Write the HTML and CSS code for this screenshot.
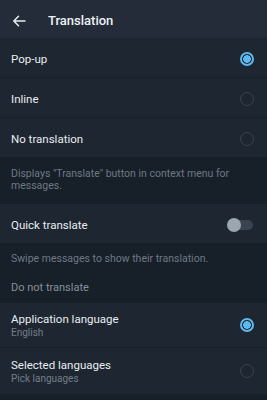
FILE: index.html
```html
<!DOCTYPE html>
<html>
<head>
<meta charset="utf-8">
<link rel="stylesheet" href="styles.css">
</head>
<body>
<div class="app">
  <header class="topbar">
    <svg class="back" width="14" height="12" viewBox="0 0 14 12"><path d="M13 6H2M6.5 1.3L1.8 6l4.7 4.7" fill="none" stroke="#e6ebef" stroke-width="1.5" stroke-linecap="round" stroke-linejoin="round"/></svg>
    <h1 class="title">Translation</h1>
  </header>

  <section class="group">
    <div class="row"><span class="label">Pop-up</span><span class="radio on"></span></div>
    <div class="row"><span class="label">Inline</span><span class="radio"></span></div>
    <div class="row"><span class="label">No translation</span><span class="radio"></span></div>
  </section>
  <p class="info first">Displays "Translate" button in context menu for messages.</p>

  <section class="group">
    <div class="row"><span class="label">Quick translate</span><span class="toggle"><span class="knob"></span></span></div>
  </section>
  <p class="info second">Swipe messages to show their translation.</p>
  <p class="caption">Do not translate</p>

  <section class="group">
    <div class="row tall">
      <div class="texts"><span class="label">Application language</span><span class="sub">English</span></div>
      <span class="radio on"></span>
    </div>
    <div class="row tall">
      <div class="texts"><span class="label">Selected languages</span><span class="sub">Pick languages</span></div>
      <span class="radio"></span>
    </div>
  </section>
</div>
</body>
</html>
```

FILE: styles.css
```css
html, body {
  margin: 0;
  padding: 0;
  background: #171f28;
  font-family: Roboto, "Liberation Sans", sans-serif;
}
.app {
  width: 267px;
  min-height: 400px;
  background: #171f28;
}
.topbar {
  height: 38px;
  background: #232c38;
  display: flex;
  align-items: center;
  padding: 3px 0 0 12px;
  box-sizing: border-box;
}
.back { display: block; margin-right: 22px; }
.title {
  margin: 0;
  font-size: 13px;
  font-weight: 500;
  color: #eef1f4;
}
.group { background: #1d2631; }
.row {
  height: 39px;
  display: flex;
  align-items: center;
  justify-content: space-between;
  padding: 2px 13px 0 11px;
  box-sizing: border-box;
}
.row + .row { border-top: 1px solid #18202a; height: 40px; }
.row.tall { height: 44px; padding-top: 0; }
.row.tall + .row.tall { height: 47px; padding-top: 0; }
.label { font-size: 11.5px; color: #e9edf0; }
.texts { display: flex; flex-direction: column; }
.texts .label { line-height: 15px; }
.sub { font-size: 10px; line-height: 12px; color: #737e89; }
.radio {
  width: 14px;
  height: 14px;
  box-sizing: border-box;
  border-radius: 50%;
  border: 1.5px solid #3a4450;
}
.radio.on {
  border: 2px solid #5db8ee;
  background: radial-gradient(circle, #5db8ee 0 3.6px, transparent 4px);
}
.toggle {
  position: relative;
  width: 24px;
  height: 10px;
  border-radius: 5px;
  background: #3a4450;
  margin-right: 1px;
}
.knob {
  position: absolute;
  left: -2px;
  top: -2px;
  width: 14px;
  height: 14px;
  border-radius: 50%;
  background: #9ba6b0;
}
.info {
  margin: 0;
  font-size: 10.5px;
  line-height: 12px;
  color: #6e7985;
}
.info.first { padding: 11px 14px 12px 11px; }
.info.second { padding: 10px 11px 0; }
.caption {
  margin: 0;
  padding: 16px 11px 9px;
  font-size: 11px;
  line-height: 13px;
  color: #85909b;
}
```
